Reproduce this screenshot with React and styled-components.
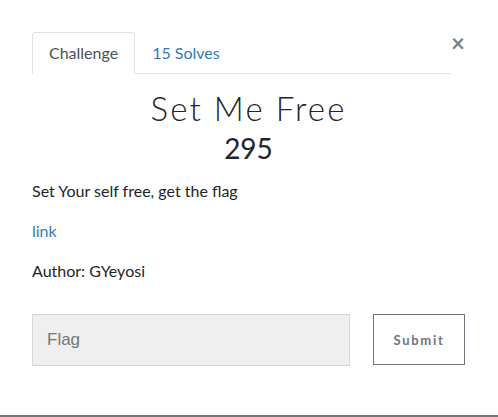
import React from "react";
import styled, { createGlobalStyle } from "styled-components";

const GlobalStyle = createGlobalStyle`
  html, body {
    margin: 0;
    padding: 0;
    background: #fff;
  }
  body {
    font-family: Lato, "Noto Sans", sans-serif;
    color: #212529;
  }
`;

export default function App() {
  return (
    <>
      <GlobalStyle />
      <Modal>
        <Header>
          <Tabs>
            <Tab active>Challenge</Tab>
            <Tab>15 Solves</Tab>
          </Tabs>
          <Close aria-label="Close">×</Close>
        </Header>
        <Title>Set Me Free</Title>
        <Points>295</Points>
        <Para>Set Your self free, get the flag</Para>
        <Para>
          <Link href="#">link</Link>
        </Para>
        <Para>Author: GYeyosi</Para>
        <SubmitRow>
          <FlagInput placeholder="Flag" />
          <SubmitButton>Submit</SubmitButton>
        </SubmitRow>
      </Modal>
    </>
  );
}

const Modal = styled.div`
  box-sizing: border-box;
  height: 100vh;
  padding: 32px 33px 0 32px;
  border-bottom: 2px solid #777;
`;

const Header = styled.div`
  display: flex;
  align-items: flex-start;
`;

const Tabs = styled.nav`
  flex: 1;
  display: flex;
  border-bottom: 1px solid #dee2e6;
`;

const Tab = styled.a`
  display: block;
  padding: 8px 16px;
  font-size: 16px;
  line-height: 24px;
  margin-bottom: -1px;
  border: 1px solid ${(p) => (p.active ? "#dee2e6" : "transparent")};
  border-bottom-color: ${(p) => (p.active ? "#fff" : "transparent")};
  border-radius: 4px 4px 0 0;
  background: ${(p) => (p.active ? "#fff" : "transparent")};
  color: ${(p) => (p.active ? "#495057" : "#337ab7")};
  cursor: pointer;
`;

const Close = styled.button`
  border: 0;
  background: none;
  padding: 0;
  margin-top: -1px;
  font-family: Lato, sans-serif;
  font-size: 24px;
  font-weight: 700;
  line-height: 1;
  color: #000;
  opacity: 0.5;
`;

const Title = styled.h3`
  margin: 14px 0 0;
  text-align: center;
  font-family: Lato, sans-serif;
  font-weight: 300;
  font-size: 33px;
  letter-spacing: 2.1px;
  line-height: 40px;
  color: #212529;
`;

const Points = styled.h4`
  margin: 2px 0 13px;
  text-align: center;
  font-weight: 400;
  font-size: 28px;
  line-height: 36px;
  color: #212529;
`;

const Para = styled.p`
  margin: 0 0 16px;
  font-size: 16px;
  line-height: 24px;
`;

const Link = styled.a`
  color: #337ab7;
  text-decoration: none;
`;

const SubmitRow = styled.div`
  display: flex;
  align-items: flex-start;
  gap: 23px;
  margin-top: 31px;
`;

const FlagInput = styled.input`
  box-sizing: border-box;
  flex: 0 0 318px;
  height: 52px;
  padding: 0 14px;
  background: #efefef;
  border: 1px solid #d3d7db;
  font-family: "Liberation Sans", Arial, sans-serif;
  font-size: 17px;
  outline: none;
  &::placeholder {
    color: #757575;
  }
`;

const SubmitButton = styled.button`
  box-sizing: border-box;
  width: 93px;
  height: 51px;
  background: #fff;
  border: 1px solid #6c757d;
  font-family: Lato, sans-serif;
  font-weight: 700;
  font-size: 13px;
  letter-spacing: 1.7px;
  color: #6c757d;
`;
